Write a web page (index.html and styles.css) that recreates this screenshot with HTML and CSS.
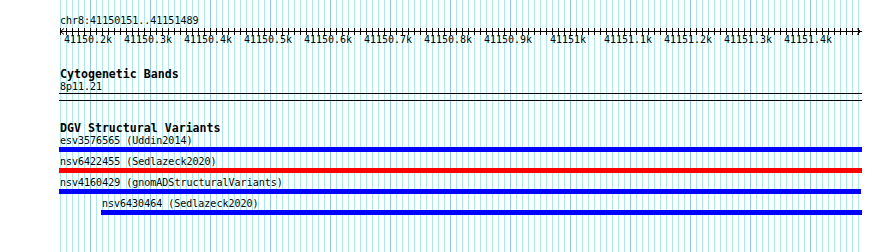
FILE: index.html
```html
<!DOCTYPE html>
<html lang="en">

<head>
    <meta charset="UTF-8">
    <meta name="viewport" content="width=device-width, initial-scale=1.0">
    <title>Genome Browser</title>
    <link rel="stylesheet" href="styles.css">
</head>

<body>
    <div class="browser">
        <div class="ruler">
            <div class="position">chr8:41150151..41151489</div>
            <svg class="axis" width="803" height="8" viewBox="0 0 803 8">
                <line x1="1" y1="4.5" x2="803" y2="4.5" stroke="#000" stroke-width="1" />
                <line x1="1" y1="4.5" x2="800" y2="4.5" stroke="#000" stroke-width="7" stroke-dasharray="1 5" />
                <polyline points="5,1.5 1.5,4.5 5,7.5" fill="none" stroke="#000" stroke-width="1" />
                <polyline points="798,1.5 801.5,4.5 798,7.5" fill="none" stroke="#000" stroke-width="1" />
            </svg>
            <div class="ticks">
                <span>41150.2k</span>
                <span>41150.3k</span>
                <span>41150.4k</span>
                <span>41150.5k</span>
                <span>41150.6k</span>
                <span>41150.7k</span>
                <span>41150.8k</span>
                <span>41150.9k</span>
                <span>41151k</span>
                <span>41151.1k</span>
                <span>41151.2k</span>
                <span>41151.3k</span>
                <span>41151.4k</span>
            </div>
        </div>

        <div class="track cytoband">
            <div class="track-title">Cytogenetic Bands</div>
            <div class="label">8p11.21</div>
            <div class="rule"></div>
            <div class="rule second"></div>
        </div>

        <div class="track dgv">
            <div class="track-title">DGV Structural Variants</div>
            <div class="item">
                <div class="label">esv3576565 (Uddin2014)</div>
                <div class="bar blue"></div>
            </div>
            <div class="item">
                <div class="label">nsv6422455 (Sedlazeck2020)</div>
                <div class="bar red"></div>
            </div>
            <div class="item short">
                <div class="label">nsv4160429 (gnomADStructuralVariants)</div>
                <div class="bar blue"></div>
            </div>
            <div class="item indent">
                <div class="label">nsv6430464 (Sedlazeck2020)</div>
                <div class="bar blue"></div>
            </div>
        </div>
    </div>
</body>

</html>
```

FILE: styles.css
```css
body {
    margin: 0;
    background-color: #fff;
    font-family: "DejaVu Sans Mono", monospace;
    font-size: 10px;
    line-height: 12px;
    color: #000;
}

.browser {
    width: 803px;
    min-height: 252px;
    margin-left: 59px;
    padding-top: 15px;
    box-sizing: border-box;
    background-image:
        repeating-linear-gradient(to right, transparent 0 31px, #8ccaec 31px 32px, transparent 32px 60px),
        repeating-linear-gradient(to right, transparent 0 1px, #aae9ec 1px 2px, transparent 2px 6px);
}

.position {
    padding-left: 1px;
}

.axis {
    display: block;
}

.ticks {
    display: flex;
    margin-left: -1px;
    margin-top: -1px;
}

.ticks span {
    flex: 0 0 60px;
    text-align: center;
}

.track-title {
    font-weight: bold;
    font-size: 11.6px;
    line-height: 13px;
    padding-left: 1px;
}

.label {
    padding-left: 1px;
    white-space: nowrap;
}

.cytoband {
    margin-top: 22px;
}

.rule {
    height: 1px;
    background-color: #000;
}

.rule.second {
    margin-top: 6px;
}

.dgv {
    margin-top: 21px;
}

.item {
    margin-bottom: 4px;
}

.bar {
    height: 5px;
}

.bar.blue {
    background-color: #0000ff;
}

.bar.red {
    background-color: #ff0000;
}

.item.short .bar {
    width: 802px;
}

.item.indent {
    margin-left: 42px;
}
```
